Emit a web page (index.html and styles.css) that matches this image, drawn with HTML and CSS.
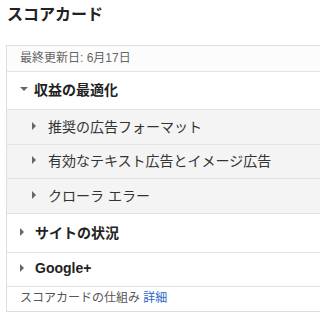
FILE: index.html
```html
<html>
<head>
<title>スコアカード</title>
<meta name="viewport" content="width=device-width, initial-scale=1">
<link rel="stylesheet" href="styles.css">
</head>
<body>
  <h2 class="title">スコアカード</h2>
  <div class="card">
    <div class="updated">最終更新日: 6月17日</div>
    <div class="row r1"><span class="tri down"></span>収益の最適化</div>
    <div class="sub"><span class="tri"></span>推奨の広告フォーマット</div>
    <div class="sub s2"><span class="tri"></span>有効なテキスト広告とイメージ広告</div>
    <div class="sub"><span class="tri"></span>クローラ エラー</div>
    <div class="row r2"><span class="tri"></span>サイトの状況</div>
    <div class="row r3"><span class="tri"></span>Google+</div>
    <div class="foot">スコアカードの仕組み <a href="#">詳細</a></div>
  </div>
</body>
</html>
```
FILE: styles.css
```css
body {
  margin: 0;
  font-family: "Liberation Sans", Arial, "Noto Sans CJK JP", sans-serif;
  color: #222;
  background: #fff;
}
.title {
  margin: 0;
  padding: 4px 0 0 7px;
  font-size: 16px;
  line-height: 21px;
  font-weight: bold;
}
.card {
  margin: 20px 0 0 6px;
  border: 1px solid #dedede;
  border-right: none;
}
.updated {
  height: 25px;
  line-height: 24px;
  padding-left: 13px;
  font-size: 12px;
  color: #666;
  background: #fcfcfc;
  border-bottom: 1px solid #e3e3e3;
}
.row {
  display: flex;
  align-items: center;
  box-sizing: border-box;
  height: 38px;
  padding: 0 0 3px 13px;
  font-size: 14px;
  font-weight: bold;
  color: #222;
  border-bottom: 1px solid #e3e3e3;
}
.row.r2 {height: 39px;}
.row.r3 {height: 34px;}
.sub {
  display: flex;
  align-items: center;
  box-sizing: border-box;
  height: 35px;
  padding: 0 0 3px 25px;
  font-size: 14px;
  color: #333;
  background: #f4f4f4;
  border-bottom: 1px solid #e3e3e3;
}
.sub.s2 {height: 34px;}
.tri {
  width: 0;
  height: 0;
  border-top: 4px solid transparent;
  border-bottom: 4px solid transparent;
  border-left: 4px solid #666;
  margin-right: 11px;
}
.tri.down {
  border-left: 4px solid transparent;
  border-right: 4px solid transparent;
  border-top: 4px solid #666;
  border-bottom: none;
  margin-right: 6px;
}
.sub .tri {
  margin-right: 12px;
}
.foot {
  height: 24px;
  line-height: 23px;
  padding-left: 13px;
  font-size: 12px;
  color: #555;
}
.foot a {
  color: #2a66c8;
  text-decoration: none;
}
```
